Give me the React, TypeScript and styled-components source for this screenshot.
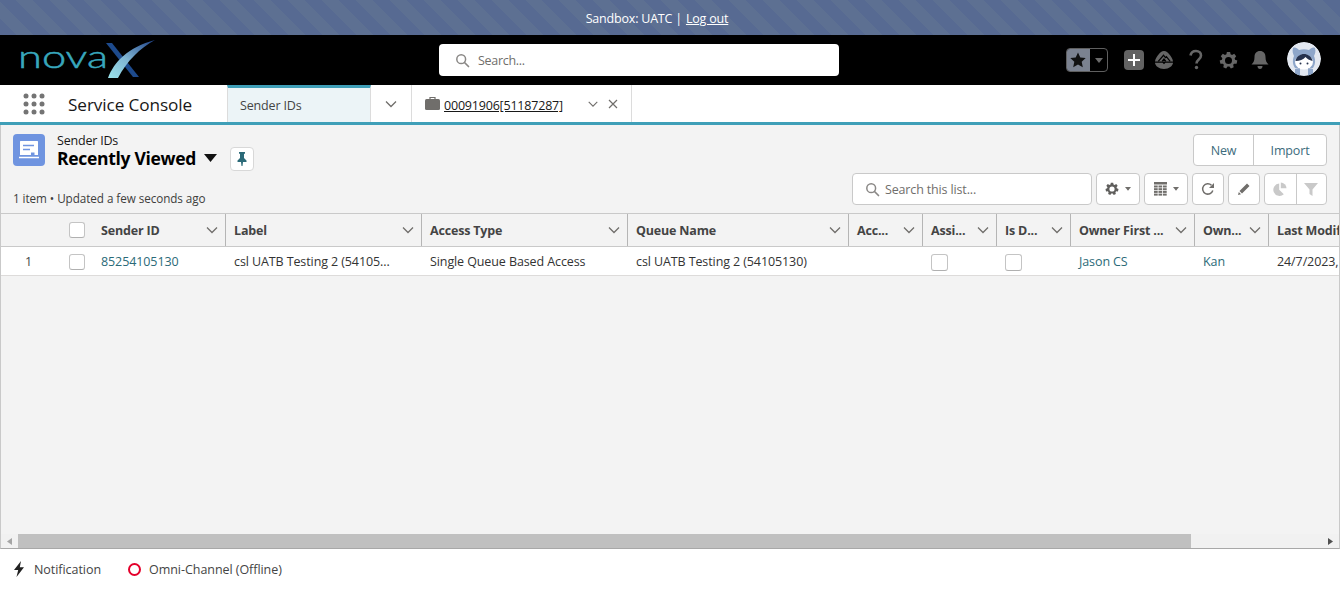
import * as React from 'react'
import styled, { createGlobalStyle } from 'styled-components'

const GlobalStyle = createGlobalStyle`
  html, body { margin: 0; padding: 0; background: #fff; }
  body { font-family: "Open Sans", "Noto Sans", sans-serif; font-size: 13px; color: #181818; }
  * { box-sizing: border-box; }
`

const COLUMNS = '59px 33px 133px 196px 206px 221px 74px 74px 74px 124px 74px 200px'

const Page = styled.div`
  width: 1340px;
  height: 589px;
  display: flex;
  flex-direction: column;
  overflow: hidden;
`

const Banner = styled.div`
  height: 35px;
  flex-shrink: 0;
  display: flex;
  align-items: center;
  justify-content: center;
  gap: 4px;
  padding: 1px 26px 0 0;
  color: #fff;
  font-size: 12.5px;
  letter-spacing: -0.2px;
  background: repeating-linear-gradient(45deg, #576a92 0 12px, #5d7092 12px 24px);
  a { color: #fff; text-decoration: underline; }
`

const Header = styled.header`
  height: 50px;
  flex-shrink: 0;
  background: #000;
  display: grid;
  grid-template-columns: 439px 400px 1fr;
  align-items: center;
`

const LogoBox = styled.div`
  padding-left: 19px;
  display: flex;
  align-items: center;
`

const GlobalSearch = styled.div`
  height: 32px;
  background: #fff;
  border-radius: 4px;
  display: flex;
  align-items: center;
  gap: 8px;
  padding-left: 16px;
  color: #706e6b;
  font-size: 12.5px;
  letter-spacing: -0.3px;
`

const HeaderActions = styled.div`
  display: flex;
  align-items: center;
  justify-content: flex-end;
  padding-right: 19px;
`

const FavGroup = styled.div`
  width: 42px;
  height: 24px;
  display: flex;
  border-radius: 4px;
  overflow: hidden;
  border: 1px solid #5f5f5f;
  margin-right: 16px;
`

const FavStar = styled.div`
  width: 24px;
  background: #7b8290;
  display: flex;
  align-items: center;
  justify-content: center;
  margin: -1px 0 -1px -1px;
`

const FavCaret = styled.div`
  flex: 1;
  display: flex;
  align-items: center;
  justify-content: center;
`

const AddButton = styled.div`
  width: 20px;
  height: 20px;
  border-radius: 4px;
  background: #626262;
  display: flex;
  align-items: center;
  justify-content: center;
  margin-right: 10px;
`

const HeaderIcon = styled.div`
  width: 20px;
  height: 24px;
  display: flex;
  align-items: center;
  justify-content: center;
  margin-right: 12px;
`

const Avatar = styled.div`
  width: 34px;
  height: 34px;
  margin: 0 0 2px 5px;
  border-radius: 50%;
  overflow: hidden;
`

const NavBar = styled.nav`
  height: 40px;
  flex-shrink: 0;
  display: flex;
  background: #fff;
  border-bottom: 3px solid #3f9fb8;
`

const AppLauncher = styled.div`
  width: 68px;
  padding-left: 23px;
  display: flex;
  align-items: center;
`

const AppName = styled.div`
  width: 159px;
  font-size: 17.2px;
  letter-spacing: -0.1px;
  line-height: 39px;
  color: #181818;
`

const TabMain = styled.div`
  width: 144px;
  background: #ecf4f7;
  border-top: 3px solid #3f9fb8;
  border-left: 1px solid #dcdcdc;
  border-right: 1px solid #dcdcdc;
  padding-left: 12px;
  font-size: 12.5px;
  letter-spacing: -0.15px;
  line-height: 35px;
  color: #444;
`

const TabMenu = styled.div`
  width: 40px;
  display: flex;
  align-items: center;
  justify-content: center;
`

const SubTab = styled.div`
  width: 221px;
  border-left: 1px solid #dcdcdc;
  border-right: 1px solid #dcdcdc;
  display: flex;
  align-items: center;
  padding-left: 13px;
`

const SubTabLink = styled.a`
  margin: 3px 0 0 4px;
  font-size: 12.5px;
  letter-spacing: -0.2px;
  color: #181818;
  text-decoration: underline;
  width: 143px;
`

const SubTabClose = styled.div`
  margin-left: 9px;
  display: flex;
  align-items: center;
`

const Workspace = styled.main`
  flex: 1;
  min-height: 0;
  background: #f3f3f3;
  border: 1px solid #c9c9c9;
  border-top: 0;
  border-bottom-color: #a8a8a8;
  display: flex;
  flex-direction: column;
`

const ListHeader = styled.div`
  height: 88px;
  flex-shrink: 0;
  display: flex;
  justify-content: space-between;
  padding: 9px 12px 0 12px;
`

const ListLeft = styled.div`
  display: flex;
  flex-direction: column;
  justify-content: space-between;
  padding-bottom: 8px;
`

const TitleRow = styled.div`
  display: flex;
  align-items: flex-start;
`

const ObjectIcon = styled.div`
  width: 32px;
  height: 32px;
  background: #6f94e0;
  border-radius: 4px;
  display: flex;
  align-items: center;
  justify-content: center;
  margin-right: 12px;
`

const TitleText = styled.div`
  display: flex;
  flex-direction: column;
`

const ObjectLabel = styled.div`
  font-size: 12.5px;
  letter-spacing: -0.2px;
  line-height: 14px;
  color: #181818;
`

const ListTitle = styled.div`
  display: flex;
  align-items: center;
  gap: 8px;
  font-size: 17.5px;
  font-weight: 700;
  letter-spacing: -0.3px;
  line-height: 20px;
  color: #000;
`

const PinButton = styled.div`
  width: 24px;
  height: 24px;
  margin: 13px 0 0 13px;
  background: #fff;
  border: 1px solid #d8d8d8;
  border-radius: 4px;
  display: flex;
  align-items: center;
  justify-content: center;
`

const ListMeta = styled.div`
  font-size: 11.7px;
  letter-spacing: -0.06px;
  line-height: 14px;
  color: #3e3e3c;
`

const ListRight = styled.div`
  display: flex;
  flex-direction: column;
  align-items: flex-end;
  gap: 7px;
`

const ButtonGroup = styled.div`
  display: flex;
  height: 32px;
  background: #fff;
  border: 1px solid #c9c9c9;
  border-radius: 4px;
`

const TextButton = styled.div<{ $width: number }>`
  width: ${p => p.$width}px;
  display: flex;
  align-items: center;
  justify-content: center;
  font-size: 12.5px;
  letter-spacing: -0.15px;
  color: #3c6b7c;
  & + & { border-left: 1px solid #c9c9c9; }
`

const Toolbar = styled.div`
  display: flex;
  gap: 4px;
`

const ListSearch = styled.div`
  width: 240px;
  height: 32px;
  background: #fff;
  border: 1px solid #c9c9c9;
  border-radius: 4px;
  display: flex;
  align-items: center;
  gap: 5px;
  padding-left: 12px;
  font-size: 12.5px;
  letter-spacing: -0.15px;
  color: #706e6b;
`

const IconButton = styled.div<{ $width: number }>`
  width: ${p => p.$width}px;
  height: 32px;
  background: #fff;
  border: 1px solid #c9c9c9;
  border-radius: 4px;
  display: flex;
  align-items: center;
  justify-content: center;
  gap: 6px;
`

const IconGroupItem = styled.div`
  width: 30.5px;
  display: flex;
  align-items: center;
  justify-content: center;
  & + & { border-left: 1px solid #c9c9c9; }
`

const TableArea = styled.div`
  flex: 1;
  min-height: 0;
  overflow: hidden;
`

const HeadRow = styled.div`
  display: grid;
  grid-template-columns: ${COLUMNS};
  height: 34px;
  border-top: 1px solid #c9c9c9;
  border-bottom: 1px solid #c9c9c9;
`

const HeadCell = styled.div<{ $divider?: boolean }>`
  display: flex;
  align-items: center;
  justify-content: space-between;
  padding: 0 6px 0 8px;
  font-size: 12.5px;
  font-weight: 700;
  letter-spacing: -0.18px;
  color: #444;
  overflow: hidden;
  white-space: nowrap;
  border-right: ${p => (p.$divider ? '1px solid #b5b5b5' : '0')};
`

const CheckHead = styled.div`
  display: flex;
  align-items: center;
  justify-content: flex-start;
  padding-left: 9px;
`

const DataRow = styled.div`
  display: grid;
  grid-template-columns: ${COLUMNS};
  height: 29px;
  background: #fff;
  border-bottom: 1px solid #dddbda;
`

const RowNumber = styled.div`
  display: flex;
  align-items: center;
  padding-left: 24px;
  font-size: 12.5px;
  color: #444;
`

const Cell = styled.div`
  display: flex;
  align-items: center;
  padding-left: 8px;
  font-size: 12.5px;
  letter-spacing: -0.1px;
  color: #333;
  overflow: hidden;
  white-space: nowrap;
`

const LinkCell = styled(Cell)`
  color: #2b6a78;
`

const Checkbox = styled.span<{ $size?: number; $drop?: number }>`
  display: block;
  width: ${p => p.$size ?? 16}px;
  height: ${p => p.$size ?? 16}px;
  margin-top: ${p => p.$drop ?? 0}px;
  background: #fff;
  border: 1px solid #c4c4c4;
  border-bottom-color: #b0b0b0;
  border-radius: 3px;
`

const ScrollBar = styled.div`
  height: 14px;
  flex-shrink: 0;
  display: flex;
  align-items: center;
  background: #f1f1f1;
`

const ScrollArrow = styled.div`
  width: 17px;
  display: flex;
  align-items: center;
  justify-content: center;
`

const ScrollTrack = styled.div`
  flex: 1;
  align-self: stretch;
`

const ScrollThumb = styled.div`
  width: 1173px;
  height: 100%;
  background: #c0c0c0;
`

const Footer = styled.footer`
  height: 40px;
  flex-shrink: 0;
  display: flex;
  align-items: center;
  padding-left: 13px;
  background: #fff;
  font-size: 12.5px;
  letter-spacing: -0.05px;
  color: #444;
`

const FooterItem = styled.div`
  display: flex;
  align-items: center;
  gap: 9px;
  margin-right: 27px;
`

const OfflineDot = styled.span`
  width: 13px;
  height: 13px;
  border: 2px solid #e4002b;
  border-radius: 50%;
  margin-right: -1px;
`

const Chevron = ({ size = 14, color = '#706e6b' }: { size?: number; color?: string }) => (
  <svg width={size} height={size} viewBox="0 0 14 14" style={{ flexShrink: 0 }}>
    <path d="M2 4.500 7 9.500 12 4.500" fill="none" stroke={color} strokeWidth="1.300" />
  </svg>
)

const Caret = ({ color = '#706e6b', width = 8 }: { color?: string; width?: number }) => (
  <svg width={width} height={(width * 5) / 8} viewBox="0 0 8 5"><path d="M0 0h8L4 5z" fill={color} /></svg>
)

const SearchIcon = ({ size = 15 }: { size?: number }) => (
  <svg width={size} height={size} viewBox="0 0 15 15" style={{ flexShrink: 0 }}>
    <circle cx="6.200" cy="6.200" r="4.400" fill="none" stroke="#8a8886" strokeWidth="1.500" />
    <path d="M9.500 9.500 13.500 13.500" stroke="#8a8886" strokeWidth="1.700" strokeLinecap="round" />
  </svg>
)

const GearIcon = ({ size, color }: { size: number; color: string }) => (
  <svg width={size} height={size} viewBox="0 0 20 20">
    <path
      fill={color}
      fillRule="evenodd"
      d="M8.300 1h3.400l.5 2.500 1.500.7L16 2.900l2.100 2.600-1.600 2 .4 1.600 2.400 1-.8 3.300-2.600-.1-1 1.300.6 2.500-3 1.400-1.500-2.100H9l-1.500 2.100-3-1.400.6-2.500-1-1.300-2.600.1-.8-3.300 2.400-1 .4-1.600-1.600-2L4 2.900l2.300 1.300 1.500-.7zM10 6.300a3.700 3.700 0 1 0 0 7.400 3.700 3.700 0 0 0 0-7.400z"
    />
  </svg>
)

const Logo = () => (
  <svg width="140" height="40" viewBox="0 0 140 40">
    <defs>
      <linearGradient id="swoosh" x1="0" y1="1" x2="1" y2="0">
        <stop offset="0" stopColor="#9be3ea" />
        <stop offset="0.45" stopColor="#7fb4d2" />
        <stop offset="1" stopColor="#1c3f86" />
      </linearGradient>
    </defs>
    <text
      x="-1"
      y="28"
      fill="#38a7bd"
      stroke="#38a7bd"
      strokeWidth="0.5"
      fontFamily="Lato, sans-serif"
      fontWeight="300"
      fontSize="31"
      textLength="90"
      lengthAdjust="spacingAndGlyphs"
    >
      nova
    </text>
    <path d="M87 3h6l27 34h-6z" fill="#1d4a8c" />
    <path d="M89 38c6-16 20-31 47-38-15 8-28 21-37 38z" fill="url(#swoosh)" />
  </svg>
)

const AvatarArt = () => (
  <svg width="34" height="34" viewBox="0 0 34 34">
    <circle cx="17" cy="17" r="17" fill="#e3e8f0" />
    <path d="M6 6c2-1 4 0 6 2 3-1 7-1 10 0 2-2 4-3 6-2 1 3 0 6-1 8 2 5 1 9-1 12H8C6 23 5 19 7 14 6 12 5 9 6 6z" fill="#8ea6c9" />
    <ellipse cx="17" cy="20" rx="9" ry="7.500" fill="#fff" />
    <path d="M8.500 19c1-5 5-7 8.500-7s7.500 2 8.500 7c-3-1-5.500-2-7-4-2 2.500-6 4-10 4z" fill="#26324d" />
    <circle cx="13.500" cy="21.500" r="1" fill="#26324d" />
    <circle cx="20.500" cy="21.500" r="1" fill="#26324d" />
    <path d="M8 27c2-1 4-1 5-.5V34H8zM26 27c-2-1-4-1-5-.5V34h5z" fill="#8ea6c9" />
  </svg>
)

const DOTS = [0, 1, 2].flatMap(y => [0, 1, 2].map(x => [x, y]))
const GRID = [0, 1, 2, 3].flatMap(y => [0, 1, 2].map(x => [x, y]))

const headers: string[] = [
  'Sender ID',
  'Label',
  'Access Type',
  'Queue Name',
  'Acc...',
  'Assi...',
  'Is D...',
  'Owner First ...',
  'Own...',
  'Last Modified Date',
]

export default function App() {
  return (
    <Page>
      <GlobalStyle />
      <Banner>
        <span>Sandbox: UATC |</span>
        <a href="#logout">Log out</a>
      </Banner>
      <Header>
        <LogoBox><Logo /></LogoBox>
        <GlobalSearch>
          <SearchIcon />
          <span>Search...</span>
        </GlobalSearch>
        <HeaderActions>
          <FavGroup>
            <FavStar>
              <svg width="18" height="18" viewBox="0 0 18 18"><path d="M9 1.500l2.300 5 5.400.6-4 3.700 1.100 5.400L9 13.500l-4.800 2.700 1.100-5.400-4-3.700 5.400-.6z" fill="#111" /></svg>
            </FavStar>
            <FavCaret><Caret color="#6b6b6b" /></FavCaret>
          </FavGroup>
          <AddButton>
            <svg width="14" height="14" viewBox="0 0 14 14"><path d="M7 1v12M1 7h12" stroke="#fff" strokeWidth="2" /></svg>
          </AddButton>
          <HeaderIcon>
            <svg width="21" height="20" viewBox="0 0 21 20">
              <path d="M10.500 0.500C13 0.500 14.500 2 16 4c1.700 2 3.500 4.500 4 7.500H1C1.500 8.500 3.300 6 5 4c1.500-2 3-3.500 5.500-3.500z" fill="#666" />
              <path d="M4.500 11.500 10 5l2 2.500 1-1 4 5M8.500 11.500 10.500 9l2 2.500" fill="none" stroke="#000" strokeWidth="1.300" />
              <path d="M1 13h8l1.500 1.500L12 13h8c-.5 3.500-4 6.500-9.500 6.500S1.500 16.500 1 13z" fill="#666" />
            </svg>
          </HeaderIcon>
          <HeaderIcon>
            <svg width="16" height="22" viewBox="0 0 16 22">
              <path d="M2.500 6.500C3 3.500 5 2 8 2s5 2 5 4.500c0 4-4.500 4-4.500 8" fill="none" stroke="#666" strokeWidth="2.600" />
              <circle cx="8.500" cy="18.500" r="1.700" fill="#666" />
            </svg>
          </HeaderIcon>
          <HeaderIcon>
            <GearIcon size={19} color="#666" />
          </HeaderIcon>
          <HeaderIcon>
            <svg width="20" height="20" viewBox="0 0 20 20">
              <path d="M10 1c3.500 0 5.500 2.500 5.500 6 0 4 1 5.500 3 7.500H1.500c2-2 3-3.500 3-7.500C4.500 3.500 6.500 1 10 1z" fill="#666" />
              <path d="M7.500 16h5c0 2-1 3-2.500 3s-2.500-1-2.500-3z" fill="#666" />
            </svg>
          </HeaderIcon>
          <Avatar><AvatarArt /></Avatar>
        </HeaderActions>
      </Header>
      <NavBar>
        <AppLauncher>
          <svg width="22" height="22" viewBox="0 0 22 22">
            {DOTS.map(([x, y]) => (
              <circle key={`${x}-${y}`} cx={3 + x * 8} cy={3 + y * 8} r="2.500" fill="#747474" />
            ))}
          </svg>
        </AppLauncher>
        <AppName>Service Console</AppName>
        <TabMain>Sender IDs</TabMain>
        <TabMenu><Chevron /></TabMenu>
        <SubTab>
          <svg width="15" height="15" viewBox="0 0 15 15">
            <path d="M5 3V1.500h5V3" fill="none" stroke="#706e6b" strokeWidth="1.200" />
            <rect x="0" y="3" width="15" height="11" rx="1.500" fill="#706e6b" />
          </svg>
          <SubTabLink>00091906[51187287]</SubTabLink>
          <Chevron size={12} />
          <SubTabClose>
            <svg width="10" height="10" viewBox="0 0 10 10"><path d="M1 1l8 8M9 1l-8 8" stroke="#706e6b" strokeWidth="1.200" /></svg>
          </SubTabClose>
        </SubTab>
      </NavBar>
      <Workspace>
        <ListHeader>
          <ListLeft>
            <TitleRow>
              <ObjectIcon>
                <svg width="22" height="22" viewBox="0 0 22 22">
                  <path d="M2.500 2h17a.5.5 0 0 1 .5.5V16H2V2.500a.5.5 0 0 1 .5-.5z" fill="#fff" />
                  <path d="M5 6.500h11M5 10.500h7" stroke="#6f94e0" strokeWidth="1.500" />
                  <path d="M13 16v-2.500h3.500V16z" fill="#6f94e0" />
                  <path d="M1 18.500h20" stroke="#fff" strokeWidth="1.500" />
                </svg>
              </ObjectIcon>
              <TitleText>
                <ObjectLabel>Sender IDs</ObjectLabel>
                <ListTitle>
                  Recently Viewed
                  <svg width="13" height="8" viewBox="0 0 13 8"><path d="M0 0h13L6.500 8z" fill="#111" /></svg>
                </ListTitle>
              </TitleText>
              <PinButton>
                <svg width="12" height="14" viewBox="0 0 12 14">
                  <path d="M3 0h6v1.500L8 2v4l2.500 2.500V10H7l-.5 4h-1L5 10H1.500V8.500L4 6V2L3 1.500z" fill="#2b6a78" />
                </svg>
              </PinButton>
            </TitleRow>
            <ListMeta>1 item • Updated a few seconds ago</ListMeta>
          </ListLeft>
          <ListRight>
            <ButtonGroup>
              <TextButton $width={59}>New</TextButton>
              <TextButton $width={73}>Import</TextButton>
            </ButtonGroup>
            <Toolbar>
              <ListSearch>
                <SearchIcon size={15} />
                <span>Search this list...</span>
              </ListSearch>
              <IconButton $width={44}>
                <GearIcon size={14} color="#5f5e5c" />
                <Caret width={6} />
              </IconButton>
              <IconButton $width={44}>
                <svg width="13" height="14" viewBox="0 0 13 14">
                  <path d="M0 0h13v2.500H0z" fill="#706e6b" />
                  {GRID.map(([x, y]) => (
                    <rect key={`${x}-${y}`} x={x * 4.5} y={3.5 + y * 2.7} width="3.700" height="2" fill="#706e6b" />
                  ))}
                </svg>
                <Caret width={6} />
              </IconButton>
              <IconButton $width={32}>
                <svg width="14" height="14" viewBox="0 0 14 14">
                  <path d="M11.800 8.500A5.200 5.200 0 1 1 10.500 3.200" fill="none" stroke="#706e6b" strokeWidth="1.500" />
                  <path d="M13 1v5H8z" fill="#706e6b" />
                </svg>
              </IconButton>
              <IconButton $width={32}>
                <svg width="14" height="14" viewBox="0 0 14 14">
                  <path d="M10 1.500 12.500 4 5 11.500 2.500 9zM1.800 10 4 12.200 1 13z" fill="#706e6b" />
                </svg>
              </IconButton>
              <ButtonGroup>
                <IconGroupItem>
                  <svg width="14" height="14" viewBox="0 0 14 14">
                    <path d="M6.200 1.500v6.300l4.600 4.400A6.200 6.200 0 1 1 6.200 1.500z" fill="#c9c9c9" />
                    <path d="M7.800.5A6 6 0 0 1 13.500 6.200H7.800z" fill="#c9c9c9" />
                  </svg>
                </IconGroupItem>
                <IconGroupItem>
                  <svg width="14" height="14" viewBox="0 0 14 14"><path d="M0 1h14L8.500 7.500V14L5.500 12V7.500z" fill="#c9c9c9" /></svg>
                </IconGroupItem>
              </ButtonGroup>
            </Toolbar>
          </ListRight>
        </ListHeader>
        <TableArea>
          <HeadRow>
            <div />
            <CheckHead><Checkbox /></CheckHead>
            {headers.map((label, i) => (
              <HeadCell key={label} $divider={i < headers.length - 1}>
                <span>{label}</span>
                {i < headers.length - 1 && <Chevron />}
              </HeadCell>
            ))}
          </HeadRow>
          <DataRow>
            <RowNumber>1</RowNumber>
            <CheckHead><Checkbox $drop={2} /></CheckHead>
            <LinkCell>85254105130</LinkCell>
            <Cell>csl UATB Testing 2 (54105...</Cell>
            <Cell>Single Queue Based Access</Cell>
            <Cell>csl UATB Testing 2 (54105130)</Cell>
            <Cell />
            <Cell><Checkbox $size={17} $drop={2} /></Cell>
            <Cell><Checkbox $size={17} $drop={2} /></Cell>
            <LinkCell>Jason CS</LinkCell>
            <LinkCell>Kan</LinkCell>
            <Cell>24/7/2023, 11:36 am</Cell>
          </DataRow>
        </TableArea>
        <ScrollBar>
          <ScrollArrow><svg width="5" height="7" viewBox="0 0 5 7"><path d="M5 0v7L0 3.500z" fill="#a5a5a5" /></svg></ScrollArrow>
          <ScrollTrack><ScrollThumb /></ScrollTrack>
          <ScrollArrow><svg width="5" height="7" viewBox="0 0 5 7"><path d="M0 0v7l5-3.500z" fill="#505050" /></svg></ScrollArrow>
        </ScrollBar>
      </Workspace>
      <Footer>
        <FooterItem>
          <svg width="12" height="16" viewBox="0 0 12 16"><path d="M8 0 1 9h4.200L3.500 16 11 6.300H6.800z" fill="#222" /></svg>
          <span>Notification</span>
        </FooterItem>
        <FooterItem>
          <OfflineDot />
          <span>Omni-Channel (Offline)</span>
        </FooterItem>
      </Footer>
    </Page>
  )
}
